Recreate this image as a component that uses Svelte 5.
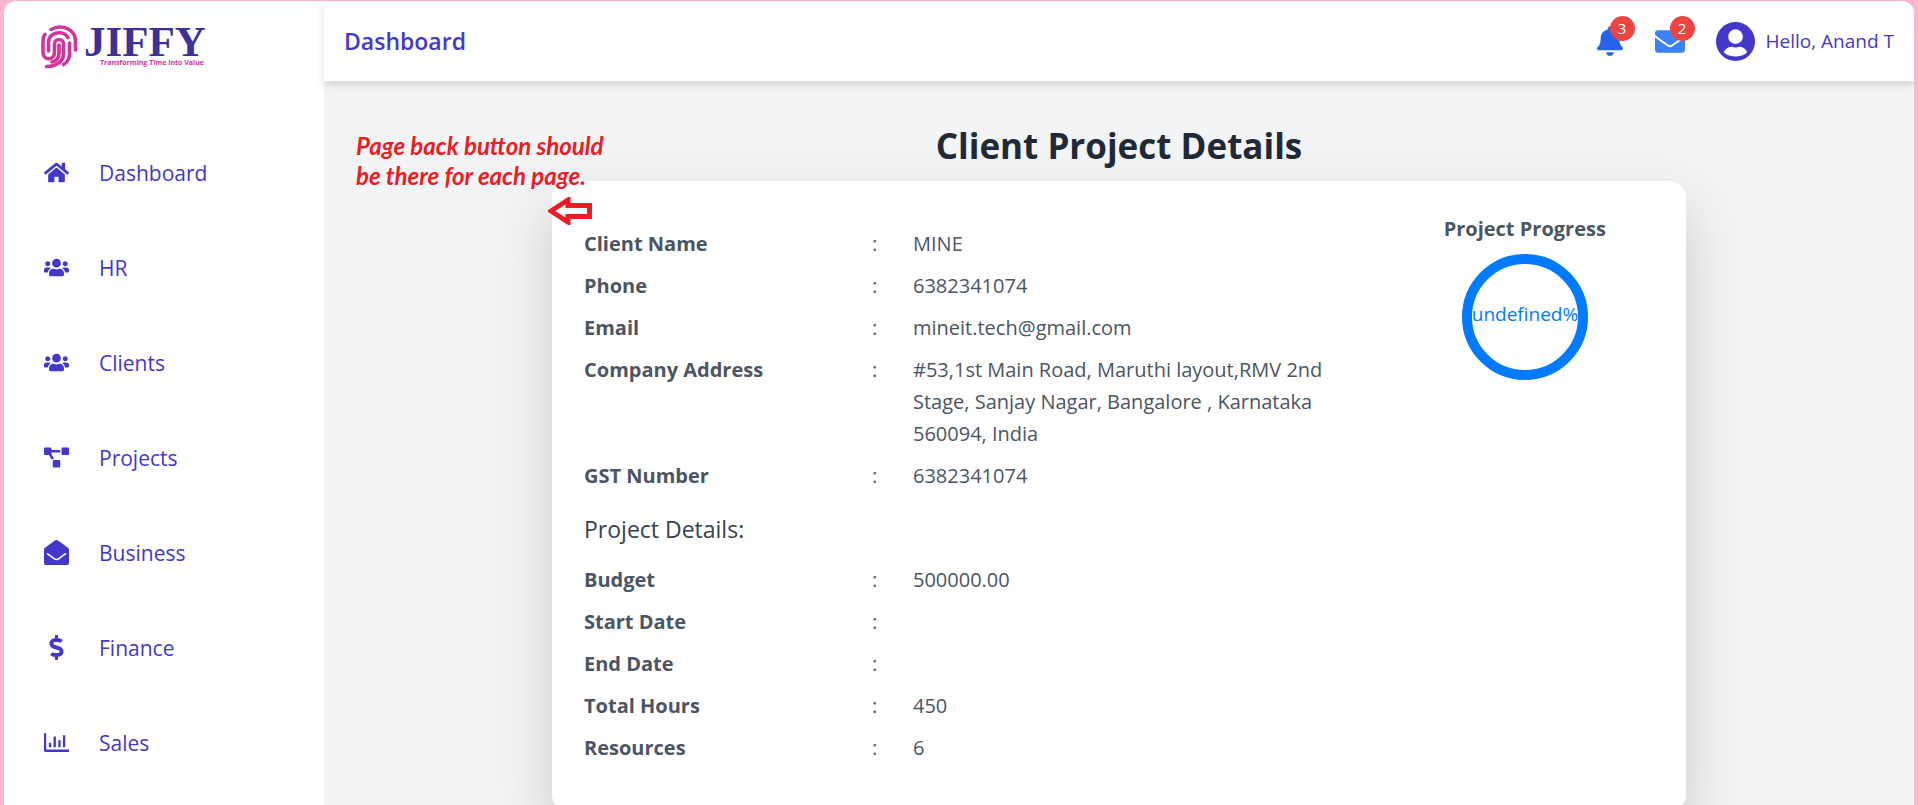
<script>
  const nav = [
    { label: 'Dashboard', icon: 'home' },
    { label: 'HR', icon: 'users' },
    { label: 'Clients', icon: 'users' },
    { label: 'Projects', icon: 'diagram' },
    { label: 'Business', icon: 'envelopeOpen' },
    { label: 'Finance', icon: 'dollar' },
    { label: 'Sales', icon: 'chart' }
  ];
  const client = [
    ['Client Name', 'MINE'],
    ['Phone', '6382341074'],
    ['Email', 'mineit.tech@gmail.com'],
    ['Company Address', '#53,1st Main Road, Maruthi layout,RMV 2nd Stage, Sanjay Nagar, Bangalore , Karnataka 560094, India'],
    ['GST Number', '6382341074']
  ];
  const project = [
    ['Budget', '500000.00'],
    ['Start Date', ''],
    ['End Date', ''],
    ['Total Hours', '450'],
    ['Resources', '6']
  ];
</script>

{#snippet icon(name)}
  {#if name === 'home'}
    <svg class="icon" viewBox="0 0 576 512"><path d="M280.4 148.3 96 300.1V464a16 16 0 0 0 16 16l112-.3a16 16 0 0 0 16-16V368a16 16 0 0 1 16-16h64a16 16 0 0 1 16 16v95.6a16 16 0 0 0 16 16.1l112 .3a16 16 0 0 0 16-16V300L295.7 148.3a12.2 12.2 0 0 0-15.3 0zM571.6 251.5 488 182.6V44a12 12 0 0 0-12-12h-56a12 12 0 0 0-12 12v72.6L318.500 43a48 48 0 0 0-61 0L4.300 251.500a12 12 0 0 0-1.600 16.900l25.500 31a12 12 0 0 0 16.900 1.600L280.400 107.200a12.200 12.200 0 0 1 15.300 0L531 301a12 12 0 0 0 16.900-1.600l25.500-31a12 12 0 0 0-1.800-16.900z"/></svg>
  {:else if name === 'users'}
    <svg class="icon" viewBox="0 0 640 512"><path d="M96 224c35.300 0 64-28.700 64-64s-28.700-64-64-64-64 28.700-64 64 28.700 64 64 64zm448 0c35.300 0 64-28.700 64-64s-28.700-64-64-64-64 28.700-64 64 28.700 64 64 64zm32 32h-64c-17.600 0-33.500 7.100-45.100 18.600 40.300 22.100 68.900 62 75.100 109.400h66c17.700 0 32-14.300 32-32v-32c0-35.300-28.700-64-64-64zm-256 0c61.900 0 112-50.100 112-112S381.900 32 320 32 208 82.100 208 144s50.100 112 112 112zm76.800 32h-8.300c-20.800 10-43.900 16-68.500 16s-47.600-6-68.500-16h-8.300C179.600 288 128 339.600 128 403.200V432c0 26.500 21.500 48 48 48h288c26.500 0 48-21.500 48-48v-28.800c0-63.600-51.600-115.200-115.200-115.200zm-223.700-13.400C161.500 263.100 145.600 256 128 256H64c-35.300 0-64 28.700-64 64v32c0 17.700 14.300 32 32 32h65.900c6.300-47.400 34.900-87.300 75.200-109.400z"/></svg>
  {:else if name === 'diagram'}
    <svg class="icon" viewBox="0 0 640 512"><path d="M384 320H256c-17.700 0-32 14.300-32 32v128c0 17.700 14.300 32 32 32h128c17.700 0 32-14.300 32-32V352c0-17.700-14.300-32-32-32zM192 32c0-17.700-14.300-32-32-32H32C14.300 0 0 14.300 0 32v128c0 17.700 14.300 32 32 32h95.700l73.200 128c11.100-19.100 31.500-32 55.100-32h.3L192 175.500V128h224V64H192V32zM608 0H480c-17.700 0-32 14.300-32 32v128c0 17.700 14.300 32 32 32h128c17.700 0 32-14.300 32-32V32c0-17.700-14.300-32-32-32z"/></svg>
  {:else if name === 'envelopeOpen'}
    <svg class="icon" viewBox="0 0 512 512"><path d="M512 464c0 26.500-21.500 48-48 48H48c-26.500 0-48-21.500-48-48V200.700c0-14.500 6.600-28.200 17.900-37.300 24.700-19.900 45.500-36.100 164.200-122.300C199.400 28.500 232.700-.4 256 0c23.300-.4 56.600 28.500 73.900 41.100 118.700 86.200 139.500 102.400 164.200 122.300 11.300 9.100 17.900 22.800 17.900 37.300V464zm-65.700-196.300c-2.600-3.800-7.900-4.600-11.500-1.800-22.900 17.300-55.600 41.800-104.900 77.600-16.800 12.300-50.200 41.400-73.900 41.200-23.700.2-57.100-28.900-73.900-41.200-49.300-35.800-82-60.300-104.900-77.600-3.700-2.800-8.900-1.900-11.500 1.800l-9.100 13.200c-2.500 3.600-1.700 8.500 1.800 11.100 22.900 17.300 55.500 41.700 104.800 77.500 20.500 14.900 56.800 47.500 92.800 47.200 36 .3 72.300-32.300 92.800-47.200 49.300-35.800 81.900-60.200 104.800-77.500 3.500-2.600 4.300-7.600 1.800-11.200z"/></svg>
  {:else if name === 'dollar'}
    <svg class="icon" viewBox="0 0 288 512"><path d="M209.200 233.400l-108-31.600C88.700 198.200 80 186.500 80 173.500c0-16.300 13.200-29.500 29.500-29.500h66.300c12.200 0 24.200 3.700 34.200 10.500 6.100 4.100 14.300 3.100 19.500-2l34.800-34c7.100-6.900 6.100-18.400-1.800-24.500C238 74.800 207.400 64.100 176 64V16c0-8.800-7.200-16-16-16h-32c-8.800 0-16 7.200-16 16v48h-2.500C45.800 64-5.400 118.700.5 183.600c4.200 46.100 39.400 83.600 83.800 96.600l102.500 30c12.500 3.700 21.200 15.300 21.200 28.300 0 16.300-13.200 29.500-29.500 29.500h-66.300C100 368 88 364.300 78 357.500c-6.100-4.100-14.300-3.100-19.500 2l-34.800 34c-7.100 6.900-6.100 18.400 1.800 24.500 24.500 19.200 55.100 29.900 86.500 30v48c0 8.800 7.200 16 16 16h32c8.800 0 16-7.200 16-16v-48.200c46.600-.9 90.300-28.600 105.700-72.700 21.500-61.600-14.600-124.800-72.500-141.700z"/></svg>
  {:else}
    <svg class="icon" viewBox="0 0 640 512"><path d="M0 16h56v420h584v60H36c-22 0-36-14-36-36zM124 262h60v118h-60zM244 104h60v276h-60zM366 196h60v184h-60zM484 70h60v310h-60z"/></svg>
  {/if}
{/snippet}

{#snippet rows(items)}
  <table>
    <tbody>
      {#each items as [label, value]}
        <tr><th scope="row">{label}</th><td class="colon">:</td><td>{value}</td></tr>
      {/each}
    </tbody>
  </table>
{/snippet}

<div class="app">
  <aside>
    <a class="logo" href="#home">
      <svg class="print" viewBox="0 0 37 44">
        <path d="M10 4.500C20-1 34.500 3 34.500 17v8M4 9.500C2 11 2 14 2 18v9c0 9 11.500 9 11.500 0v-8c0-6 9-6 9 0v10c0 8-8 12.500-17 12.500M7.500 26v-8C7.500 6 23 5 27 12.500M18 20v8c0 4-2 8-7 9M28.500 18v11c0 5-3 9-6 10.500"/>
      </svg>
      <span class="wordmark"><span class="brand">JIFFY</span><span class="tagline">Transforming Time Into Value</span></span>
    </a>
    <nav>
      {#each nav as item}
        <a href="#{item.label.toLowerCase()}">{@render icon(item.icon)}<span>{item.label}</span></a>
      {/each}
    </nav>
  </aside>

  <div class="content">
    <header>
      <h2>Dashboard</h2>
      <div class="tools">
        <button class="bell" aria-label="Notifications">
          <svg viewBox="0 0 448 512"><path d="M224 512c35.300 0 63.900-28.700 63.900-64H160.100c0 35.300 28.600 64 63.900 64zm215.400-149.700c-19.300-20.800-55.500-52-55.500-154.300 0-77.700-54.500-139.900-127.900-155.200V32c0-17.700-14.300-32-32-32s-32 14.300-32 32v20.800C118.600 68.100 64.100 130.300 64.100 208c0 102.300-36.200 133.500-55.500 154.300-6 6.400-8.700 14.100-8.600 21.700.1 16.400 13 32 32.100 32h383.800c19.100 0 32-15.600 32.100-32 0-7.600-2.600-15.300-8.600-21.700z"/></svg>
          <span class="badge">3</span>
        </button>
        <button class="mail" aria-label="Messages">
          <svg viewBox="0 64 512 384"><path d="M502.300 190.800c3.900-3.100 9.700-.2 9.700 4.700V400c0 26.500-21.500 48-48 48H48c-26.500 0-48-21.500-48-48V195.600c0-5 5.700-7.800 9.700-4.700 22.400 17.400 52.100 39.500 154.100 113.600 21.100 15.400 56.700 47.800 92.200 47.600 35.700.3 72-32.800 92.300-47.600 102-74.100 131.600-96.300 154-113.700zM256 320c23.200.4 56.600-29.200 73.400-41.400 132.700-96.300 142.800-104.700 173.400-128.700 5.800-4.500 9.200-11.500 9.200-18.900v-19c0-26.500-21.500-48-48-48H48c-26.500 0-48 21.500-48 48v19c0 7.400 3.400 14.300 9.200 18.900 30.600 23.900 40.700 32.400 173.400 128.700 16.800 12.200 50.200 41.800 73.400 41.400z"/></svg>
          <span class="badge">2</span>
        </button>
        <a class="user" href="#profile">
          <svg viewBox="0 0 40 40"><circle cx="20" cy="20" r="20"/><circle cx="20" cy="15" r="7.500" fill="#fff"/><path fill="#fff" d="M8 31c2-4.500 6-5.500 8-5.500 2.500 1 5.500 1 8 0 2 0 6 1 8 5.500-6 6-18 6-24 0z"/></svg>
          <span>Hello, Anand T</span>
        </a>
      </div>
    </header>

    <main>
      <h1>Client Project Details</h1>
      <section class="card">
        <div class="details">
          {@render rows(client)}
          <h3>Project Details:</h3>
          {@render rows(project)}
        </div>
        <div class="progress">
          <h4>Project Progress</h4>
          <div class="ring">undefined%</div>
        </div>
      </section>
      <p class="note">Page back button should<br />be there for each page.</p>
      <svg class="arrow" viewBox="0 0 44 28"><path d="M3 14 20 3V8.500H41.500V19.500H20V25Z" fill="#fff" stroke="#ed1c24" stroke-width="5"/></svg>
    </main>
  </div>
</div>

<style>
  :global(body) { margin: 0; background: #feb5cd; font-family: "Open Sans", "Noto Sans", sans-serif; }
  * { box-sizing: border-box; }
  h1, h2, h3, h4, p { margin: 0; }
  a { color: inherit; text-decoration: none; }
  button { padding: 0; border: 0; background: none; font: inherit; }
  svg { display: block; fill: currentColor; }
  .app { display: flex; height: 100vh; overflow: hidden; margin: 0 4px; padding-top: 1px; color: #4338ca; }
  aside { flex: 0 0 320px; background: #fff; border-top-left-radius: 12px; }
  .logo { display: flex; height: 80px; padding: 24px 0 0 37px; gap: 6px; }
  .print { width: 37px; height: 44px; }
  .print path { fill: none; stroke: #d3349c; stroke-width: 3.6; stroke-linecap: round; }
  .wordmark { display: flex; flex-direction: column; }
  .brand { font: 700 43px/34px "Liberation Serif", serif; color: #3d3198; }
  .tagline { padding-left: 16px; font: 700 7px/8px "Open Sans", sans-serif; color: #d3349c; }
  nav { display: flex; flex-direction: column; padding-top: 44px; }
  nav a { display: flex; align-items: center; gap: 30px; height: 95px; padding-left: 40px; font-size: 21px; }
  .icon { width: 25px; height: 25px; }
  .content { flex: 1; min-width: 0; display: flex; flex-direction: column; background: #f3f4f6; border-top-right-radius: 12px; }
  header { flex: none; display: flex; justify-content: space-between; align-items: center; height: 80px; padding: 0 20px; background: #fff; border-top-right-radius: 12px; box-shadow: 0 4px 8px rgba(0, 0, 0, .14); position: relative; }
  h2 { font-size: 23px; font-weight: 600; }
  .tools { display: flex; align-items: center; }
  .tools button { position: relative; }
  .bell { color: #2563eb; margin-right: 32px; }
  .bell svg { width: 26px; height: 30px; }
  .mail { color: #3b82f6; margin-right: 31px; }
  .mail svg { width: 30px; height: 23px; }
  .badge { position: absolute; top: -10px; right: -12px; width: 25px; height: 25px; border-radius: 50%; background: #ef4444; color: #fff; font-size: 15px; line-height: 25px; text-align: center; }
  .mail .badge { top: -14px; right: -10px; }
  .user { display: flex; align-items: center; gap: 11px; font-size: 19px; }
  .user svg { width: 39px; height: 39px; }
  main { flex: 1; position: relative; display: flex; flex-direction: column; align-items: center; padding: 40px 16px 0; }
  h1 { font-size: 35px; line-height: 50px; color: #1f2937; padding-bottom: 10px; }
  .card { display: grid; grid-template-columns: 3fr 1fr; width: 100%; max-width: 1134px; padding: 32px 32px 42px; border-radius: 16px; background: #fff; box-shadow: 0 25px 60px rgba(0, 0, 0, .17); color: #4b5563; }
  .details { padding-top: 10px; }
  table { width: 100%; border-collapse: collapse; table-layout: fixed; font-size: 20px; line-height: 32px; }
  th, td { padding: 5px 0; vertical-align: top; text-align: left; }
  th { width: 288px; font-weight: 700; }
  td { padding-right: 48px; }
  .colon { width: 41px; padding: 5px 0; }
  h3 { padding: 14px 0 12px; font-size: 23px; line-height: 36px; font-weight: 500; color: #374151; }
  .progress { display: flex; flex-direction: column; align-items: center; gap: 9px; padding-left: 9px; }
  h4 { font-size: 20px; line-height: 32px; }
  .ring { display: grid; place-items: center; width: 126px; height: 126px; padding-bottom: 6px; border: 10px solid #007bff; border-radius: 50%; color: #007bff; font-size: 19px; }
  .note { position: absolute; top: 50px; left: 32px; font: italic 700 24px/30px Lato, sans-serif; color: #ed1c24; }
  .arrow { position: absolute; top: 116px; left: 224px; width: 44px; height: 28px; }
</style>
